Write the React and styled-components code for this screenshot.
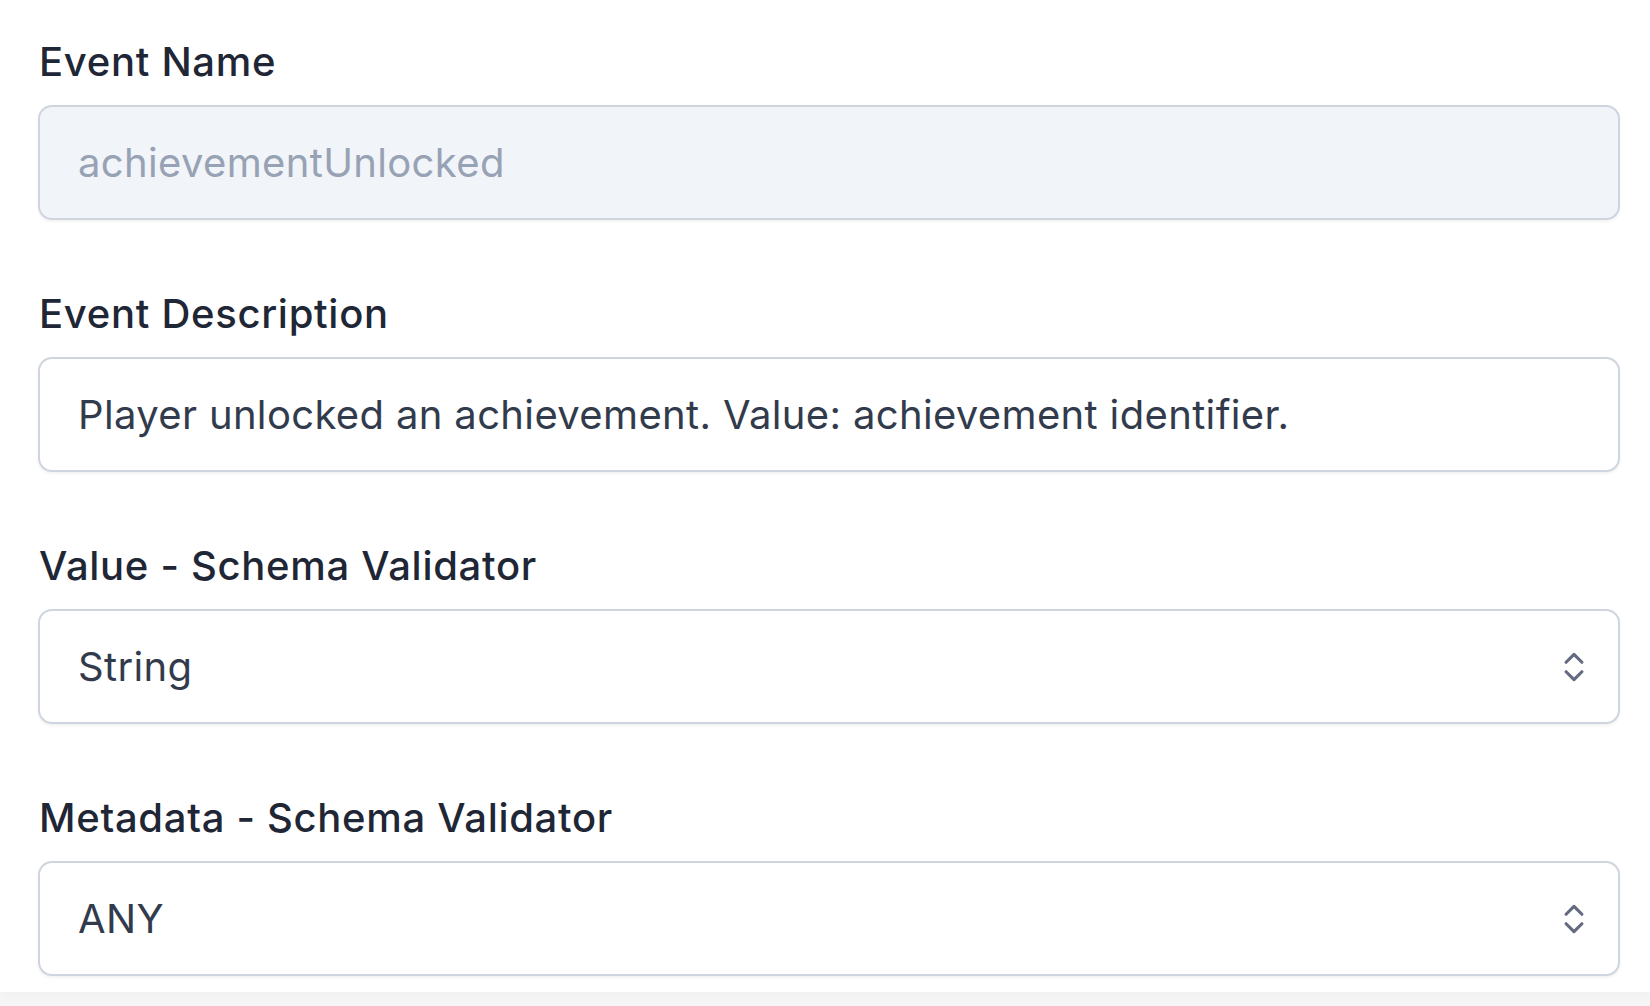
import React from "react";
import styled, { createGlobalStyle } from "styled-components";

const Global = createGlobalStyle`
  html, body { margin: 0; padding: 0; background: #f5f5f6; }
  body { font-family: Inter, "Noto Sans", "Liberation Sans", sans-serif; -webkit-font-smoothing: antialiased; }
  * { box-sizing: border-box; }
`;

const Page = styled.div`
  width: 1650px;
  height: 1006px;
  overflow: hidden;
  background: #f5f5f6;
`;

const Form = styled.form`
  display: flex;
  flex-direction: column;
  gap: 72px;
  padding: 40px 30px 16px 38px;
  background: #ffffff;
  box-shadow: 0 4px 10px rgba(0, 0, 0, 0.02);
`;

const Field = styled.div`
  display: flex;
  flex-direction: column;
  gap: 21px;
`;

const Label = styled.label`
  display: block;
  padding-left: 1px;
  font-size: 40px;
  line-height: 44px;
  font-weight: 500;
  letter-spacing: 0.7px;
  color: #1f2635;
`;

const Box = styled.div`
  display: flex;
  align-items: center;
  justify-content: space-between;
  height: 115px;
  padding: 0 25px 0 38px;
  border: 2px solid #cfd5de;
  border-radius: 14px;
  background: ${(p) => (p.$disabled ? "#f1f4f8" : "#ffffff")};
  box-shadow: 0 2px 3px rgba(15, 23, 42, 0.05);
  font-size: 40px;
  line-height: 40px;
  letter-spacing: 0.35px;
  color: ${(p) => (p.$disabled ? "#98a2b5" : "#323b4c")};
`;

const Value = styled.span`
  white-space: nowrap;
`;

const Chevrons = () => (
  <svg width="38" height="38" viewBox="0 0 24 24" fill="none" stroke="#646b80" strokeWidth="2" strokeLinecap="round" strokeLinejoin="round">
    <path d="m7 15 5 5 5-5" />
    <path d="m7 9 5-5 5 5" />
  </svg>
);

export default function App() {
  return (
    <Page>
      <Global />
      <Form>
        <Field>
          <Label>Event Name</Label>
          <Box $disabled>
            <Value>achievementUnlocked</Value>
          </Box>
        </Field>
        <Field>
          <Label>Event Description</Label>
          <Box>
            <Value>Player unlocked an achievement. Value: achievement identifier.</Value>
          </Box>
        </Field>
        <Field>
          <Label>Value - Schema Validator</Label>
          <Box>
            <Value>String</Value>
            <Chevrons />
          </Box>
        </Field>
        <Field>
          <Label>Metadata - Schema Validator</Label>
          <Box>
            <Value>ANY</Value>
            <Chevrons />
          </Box>
        </Field>
      </Form>
    </Page>
  );
}
